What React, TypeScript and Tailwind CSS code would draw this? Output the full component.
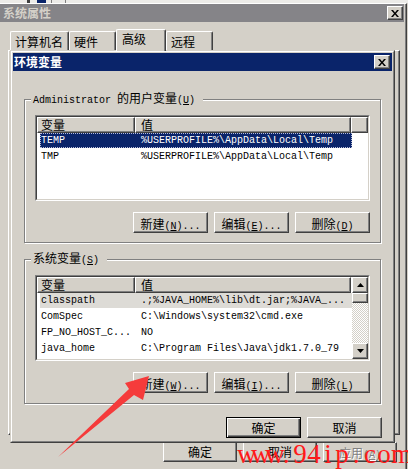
import type { ReactNode } from 'react'

const cjk = "font-['Noto_Sans_CJK_SC',sans-serif] text-[12px] leading-[14px]"
const mono = "font-['Liberation_Mono',monospace] text-[10px] leading-[14px]"
const raised =
  'border border-t-white border-l-white border-r-[#404040] border-b-[#404040] shadow-[inset_-1px_-1px_0_#808080] bg-[#d4d0c8]'

type Row = [string, string]

const userVars: Row[] = [
  ['TEMP', '%USERPROFILE%\\AppData\\Local\\Temp'],
  ['TMP', '%USERPROFILE%\\AppData\\Local\\Temp'],
]

const sysVars: Row[] = [
  ['classpath', '.;%JAVA_HOME%\\lib\\dt.jar;%JAVA_...'],
  ['ComSpec', 'C:\\Windows\\system32\\cmd.exe'],
  ['FP_NO_HOST_C...', 'NO'],
  ['java_home', 'C:\\Program Files\\Java\\jdk1.7.0_79'],
]

function Label({ zh, k, tail = '' }: { zh: string; k: string; tail?: string }) {
  return (
    <span className="whitespace-nowrap">
      <span className={cjk}>{zh}</span>
      <span className={mono}>
        (<u>{k}</u>){tail}
      </span>
    </span>
  )
}

function Button({
  children,
  primary = false,
  small = false,
}: {
  children: ReactNode
  primary?: boolean
  small?: boolean
}) {
  const frame = primary
    ? 'border border-black bg-[#d4d0c8] shadow-[inset_1px_1px_0_#fff,inset_-1px_-1px_0_#404040,inset_-2px_-2px_0_#808080]'
    : raised
  return (
    <div
      className={`flex items-center justify-center ${small ? 'h-[20px] w-[74px]' : 'h-[21px] w-[75px]'} ${frame}`}
    >
      {children}
    </div>
  )
}

function CloseBox() {
  return (
    <div className={`flex h-[14px] w-[16px] items-center justify-center ${raised}`}>
      <svg width="8" height="7" viewBox="0 0 8 7">
        <path d="M0 0h2l2 2.5L6 0h2L5 3.5 8 7H6L4 4.5 2 7H0l3-3.5z" fill="#000" />
      </svg>
    </div>
  )
}

function Arrow({ up }: { up?: boolean }) {
  return (
    <div className={`flex h-[16px] w-[16px] items-center justify-center ${raised}`}>
      <svg width="7" height="4" viewBox="0 0 7 4">
        <path d={up ? 'M3.5 0L7 4H0z' : 'M0 0h7L3.5 4z'} fill="#000" />
      </svg>
    </div>
  )
}

function ListView({ rows, scroll = false, focused = false }: { rows: Row[]; scroll?: boolean; focused?: boolean }) {
  const head = `${raised} ${cjk} h-[16px]`
  return (
    <div className="h-[86px] border border-t-[#808080] border-l-[#808080] border-r-white border-b-white">
      <div className="flex h-full border border-t-[#404040] border-l-[#404040] border-r-[#d4d0c8] border-b-[#d4d0c8] bg-white">
        <div className="flex min-w-0 flex-1 flex-col overflow-hidden">
          <div className="flex shrink-0">
            <div className={`${head} w-[98px] pl-[3px]`}>变量</div>
            <div className={`${head} w-[216px] pl-[5px]`}>值</div>
            {!scroll && <div className={`${head} flex-1`} />}
          </div>
          {rows.map(([name, value], i) => {
            const sel = i === 0
            const tone = sel
              ? focused
                ? 'bg-[#0a246a] text-white outline-1 outline-dotted outline-[#b8bcd8] -outline-offset-1'
                : 'bg-[#dddbd6] text-black'
              : 'text-black'
            return (
              <div key={name} className="h-[16px] pl-[3px]">
                <div className={`flex h-[15px] w-[312px] items-center ${mono} ${tone}`}>
                  <span className="w-[95px] shrink-0 whitespace-nowrap pl-px">{name}</span>
                  <span className="whitespace-nowrap pl-[6px]">{value}</span>
                </div>
              </div>
            )
          })}
        </div>
        {scroll && (
          <div className="flex w-[16px] flex-col">
            <Arrow up />
            <div className={`h-[10px] ${raised}`} />
            <div className="flex-1 bg-[repeating-conic-gradient(#d4d0c8_0_25%,#fff_0_50%)] bg-[length:2px_2px]" />
            <Arrow />
          </div>
        )}
      </div>
    </div>
  )
}

function Group({ legend, children, bottom }: { legend: ReactNode; children: ReactNode; bottom: string }) {
  return (
    <fieldset className="mx-[11px] border border-[#808080] shadow-[inset_1px_1px_0_#fff,1px_1px_0_#fff]">
      <legend className="ml-[6px] bg-[#d4d0c8] pl-[2px] pr-[8px] leading-[14px]">{legend}</legend>
      <div className={`px-[10px] pt-[7px] ${bottom}`}>{children}</div>
    </fieldset>
  )
}

function GroupButtons({ k1, k2, k3 }: { k1: string; k2: string; k3: string }) {
  return (
    <div className="mt-[11px] flex justify-end gap-[6px]">
      <Button>
        <Label zh="新建" k={k1} tail="..." />
      </Button>
      <Button>
        <Label zh="编辑" k={k2} tail="..." />
      </Button>
      <Button>
        <Label zh="删除" k={k3} />
      </Button>
    </div>
  )
}

function Tab({ label, width, active = false }: { label: string; width: string; active?: boolean }) {
  return (
    <div
      className={`${width} ${cjk} rounded-t-[2px] border-l border-t border-r border-l-white border-t-white border-r-[#404040] bg-[#d4d0c8] shadow-[inset_-1px_0_0_#808080] ${
        active ? 'relative z-10 -mb-px h-[22px] pl-[5px] pt-[2px]' : 'h-[19px] pl-[4px] pt-[3px]'
      }`}
    >
      {label}
    </div>
  )
}

const mark = 'www.94ip.com'.split('')

export default function App() {
  return (
    <div className="relative h-[469px] w-[408px] overflow-hidden bg-[#d4d0c8]">
      {/* strip of whatever sits above */}
      <div className="flex h-[3px] bg-[#ecebe8]">
        <div className="ml-[27px] w-[3px] bg-[#404040]" />
        <div className="ml-[7px] w-[9px] bg-[#0a246a]" />
        <div className="ml-[5px] w-px bg-[#808080]" />
        <div className="ml-[13px] w-px bg-[#808080]" />
      </div>

      {/* 系统属性 */}
      <div className="flex h-[466px] w-[407px] flex-col border-t border-r border-t-white border-r-[#404040] shadow-[inset_-1px_0_0_#808080]">
        <div className="mr-[2px] flex h-[18px] items-center justify-between bg-[#858488] pl-[3px] pr-px">
          <span className={`${cjk} font-bold text-[#d4d0c8]`}>系统属性</span>
          <CloseBox />
        </div>

        <div className="mt-[7px] flex h-[21px] items-end pl-[10px]">
          <Tab label="计算机名" width="w-[59px]" />
          <Tab label="硬件" width="w-[47px]" />
          <Tab label="高级" width="w-[50px]" active />
          <Tab label="远程" width="w-[47px]" />
        </div>
        <div className="ml-[8px] mr-[6px] h-[385px] border border-t-white border-l-white border-r-[#404040] border-b-[#404040] shadow-[inset_-1px_-1px_0_#808080]" />

        <div className="mt-[7px] flex justify-end gap-[6px] pr-[9px]">
          <Button small>
            <span className={cjk}>确定</span>
          </Button>
          <Button small>
            <span className={cjk}>取消</span>
          </Button>
          <Button small>
            <span className="whitespace-nowrap text-[#808080] [text-shadow:1px_1px_0_#fff]">
              <span className={cjk}>应用</span>
              <span className={mono}>
                (<u>A</u>)
              </span>
            </span>
          </Button>
        </div>
      </div>

      {/* 环境变量 dialog */}
      <div className="absolute left-[10px] top-[50px] h-[393px] w-[385px] border border-t-[#d4d0c8] border-l-[#d4d0c8] border-r-[#404040] border-b-[#404040] bg-[#d4d0c8]">
        <div className="flex h-full flex-col border border-t-white border-l-white border-r-[#808080] border-b-[#808080] p-px">
          <div className="flex h-[18px] shrink-0 items-center justify-between bg-[#0a246a] pl-px pr-[2px]">
            <span className={`${cjk} font-bold text-white`}>环境变量</span>
            <CloseBox />
          </div>

          <div className="mt-[19px]">
            <Group
              bottom="pb-[9px]"
              legend={
                <span className="whitespace-nowrap">
                  <span className={mono}>Administrator </span>
                  <Label zh="的用户变量" k="U" />
                </span>
              }
            >
              <ListView rows={userVars} focused />
              <GroupButtons k1="N" k2="E" k3="D" />
            </Group>
          </div>

          <div className="mt-[7px]">
            <Group bottom="pb-[10px]" legend={<Label zh="系统变量" k="S" />}>
              <ListView rows={sysVars} scroll />
              <GroupButtons k1="W" k2="I" k3="L" />
            </Group>
          </div>

          <div className="mt-[13px] flex justify-end gap-[6px] pr-[10px]">
            <Button primary>
              <span className={cjk}>确定</span>
            </Button>
            <Button>
              <span className={cjk}>取消</span>
            </Button>
          </div>
        </div>
      </div>

      {/* red arrow */}
      <svg className="pointer-events-none absolute left-0 top-0" width="408" height="469" viewBox="0 0 408 469">
        <polygon points="149,376 125,383 129,389 58,457 134,395 143,400" fill="#f53b3b" />
      </svg>

      {/* watermark */}
      <div className="pointer-events-none absolute left-[237px] top-[440px] flex font-['Liberation_Serif',serif] text-[27px] leading-[28px] text-[#ff1a1a]">
        {mark.map((c, i) => (
          <span key={i} className="inline-block w-[14px] text-center">
            {c}
          </span>
        ))}
      </div>
    </div>
  )
}
